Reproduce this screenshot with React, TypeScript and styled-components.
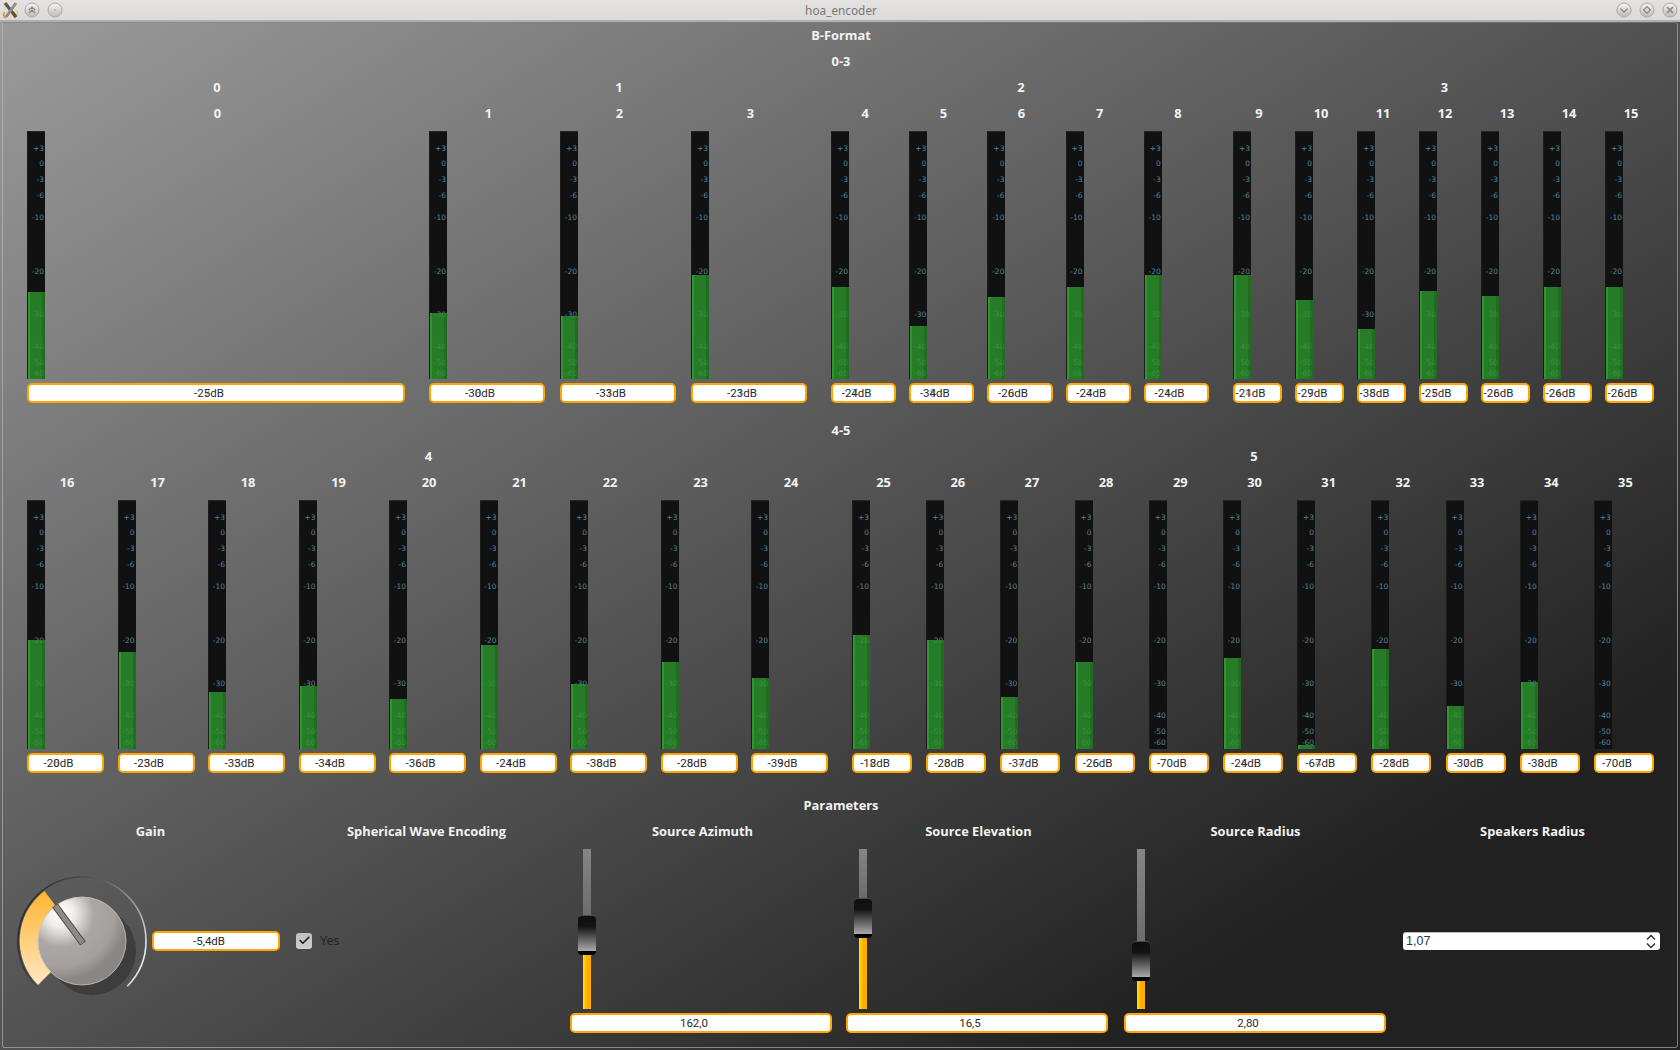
import React from "react";
import styled, { createGlobalStyle } from "styled-components";
import { Check } from "lucide-react";

const Global = createGlobalStyle`
  html, body { margin: 0; padding: 0; }
  body { width: 1680px; height: 1050px; overflow: hidden; font-family: "Open Sans", "Noto Sans", sans-serif; }
  #root { width: 1680px; height: 1050px; }
`;

const Window = styled.div`
  width: 1680px;
  height: 1050px;
  display: flex;
  flex-direction: column;
  background: linear-gradient(to bottom right, #9c9c9c 0%, #212121 83%, #212121 100%);
`;

const TitleBar = styled.header`
  flex: 0 0 20px;
  display: flex;
  align-items: center;
  justify-content: space-between;
  padding: 0 2px 0 2px;
  background: linear-gradient(#e3e2e0, #dcdbd9);
  border-bottom: 2px solid rgba(0, 0, 0, 0.22);
  position: relative;
`;

const TitleText = styled.span`
  position: absolute;
  left: 2px;
  right: 0;
  top: 2px;
  text-align: center;
  font: 11.8px/16px "Noto Sans", "Open Sans", sans-serif;
  color: #777;
`;

const IconGroup = styled.div`
  display: flex;
  align-items: center;
  gap: 7px;
`;

const Frame = styled.main`
  flex: 1;
  margin: 0 2px 2px;
  border: 1px solid rgba(190, 190, 190, 0.6);
  border-top-color: rgba(130, 130, 130, 0.55);
  border-radius: 3px;
  padding-top: 4px;
  display: flex;
  flex-direction: column;
  min-height: 0;
`;

const Label = styled.div<{ $gap?: number }>`
  height: 16px;
  margin-bottom: ${(p) => p.$gap ?? 10}px;
  padding-left: 2px;
  font: 700 12.85px/17px "Open Sans", "Noto Sans", sans-serif;
  color: #f2f2f2;
  text-align: center;
  white-space: nowrap;
`;

const ChannelLabel = styled(Label)`
  padding-left: 3px;
`;

const ParamLabel = styled(Label)`
  line-height: 15px;
`;

const ParamHeading = styled(ParamLabel)`
  margin-bottom: 9px;
  padding-left: 3px;
`;

const Section = styled.section<{ $after?: number }>`
  padding: 0 24px;
  margin-bottom: ${(p) => p.$after ?? 0}px;
`;

const Groups = styled.div`
  display: flex;
  gap: 24px;
`;

const Group = styled.div<{ $w: number }>`
  width: ${(p) => p.$w}px;
  flex: none;
`;

const Channels = styled.div<{ $gap: number }>`
  display: flex;
  gap: ${(p) => p.$gap}px;
`;

const Channel = styled.div`
  flex: 1 1 0;
  min-width: 0;
  display: flex;
  flex-direction: column;
`;

const Meter = styled.div<{ $h: number }>`
  position: relative;
  width: 18px;
  height: ${(p) => p.$h}px;
  box-sizing: border-box;
  margin-bottom: 4px;
  background: #111;
  border-top: 1px solid #262626;
  border-left: 1px solid #1b1b1b;
  overflow: hidden;
`;

const Tick = styled.span<{ $y: number }>`
  position: absolute;
  right: 1px;
  top: ${(p) => p.$y - 5}px;
  font: 7.5px/10px "DejaVu Sans", sans-serif;
  color: #55849a;
`;

const Fill = styled.div`
  position: absolute;
  left: 0;
  right: 0;
  bottom: 0;
  background: linear-gradient(
    90deg,
    rgba(54, 184, 54, 0.8) 0,
    rgba(54, 184, 54, 0.8) 2px,
    rgba(44, 150, 44, 0.8) 2px,
    rgba(44, 150, 44, 0.8) 80%,
    rgba(38, 130, 38, 0.8) 80%
  );
`;

const ValueBox = styled.div<{ $w?: number }>`
  box-sizing: border-box;
  width: ${(p) => (p.$w ? `${p.$w}px` : "100%")};
  height: 20px;
  flex: none;
  border: 2px solid #ffa600;
  border-radius: 5px;
  background: #fff;
  padding-right: 14px;
  text-align: center;
  font: 11.5px/16px "Roboto", "Noto Sans", sans-serif;
  color: #2a2a2a;
  white-space: nowrap;
`;

const Digit = styled.span`
  position: relative;
  display: inline-block;
`;

const Ghost = styled.span`
  position: absolute;
  left: 0;
  top: 0;
  opacity: 0.45;
`;

const ParamGrid = styled.div`
  margin-left: 8px;
  display: grid;
  grid-template-columns: 276px 276px 276px 276px 278px 276px;
`;

const Cell = styled.div`
  height: 183px;
  padding: 0 7px;
  display: flex;
  align-items: center;
`;

const SliderCell = styled(Cell)<{ $inset?: number }>`
  flex-direction: column;
  align-items: stretch;
  justify-content: flex-start;
  padding-left: ${(p) => p.$inset ?? 7}px;
`;

const KnobBox = styled.svg`
  flex: none;
  width: 130px;
  height: 130px;
  margin: 0 5px 0 -1px;
  overflow: visible;
`;

const CheckRow = styled.label`
  display: flex;
  align-items: center;
  gap: 8px;
  margin-left: 2px;
  font: 12.5px/16px "Noto Sans", sans-serif;
  color: #242424;
`;

const CheckBox = styled.span`
  width: 16px;
  height: 16px;
  border-radius: 3px;
  background: linear-gradient(#c2beba, #d2cecb);
  display: flex;
  align-items: center;
  justify-content: center;
  color: #1a1a1a;
`;

const Slider = styled.div`
  width: 18px;
  height: 160px;
  margin: 0 0 4px 8px;
  display: flex;
  flex-direction: column;
  align-items: center;
`;

const TrackUp = styled.div`
  width: 8px;
  background: linear-gradient(#858585, #6c6c6c);
`;

const TrackDown = styled.div`
  width: 8px;
  background: linear-gradient(90deg, #ffe600 0, #ffc400 30%, #ffab00 50%, #ffab00 100%);
`;

const Handle = styled.div`
  flex: 0 0 40px;
  width: 18px;
  box-sizing: border-box;
  border-radius: 4px;
  border-top: 1px solid #4a4a4a;
  border-bottom: 4px solid #000;
  background: linear-gradient(#0f0f0f 0%, #131313 30%, #aaa 100%);
`;

const Select = styled.div`
  box-sizing: border-box;
  width: 257px;
  height: 18px;
  margin-left: 3px;
  padding: 0 4px 0 3px;
  display: flex;
  align-items: center;
  justify-content: space-between;
  background: #fff;
  border-top: 1px solid #bbb;
  border-radius: 3px;
  font: 12.5px/16px "Liberation Sans", sans-serif;
  color: #333;
`;

const LogoMark = styled.svg`
  margin-right: -2px;
`;

const TICKS: [string, number][] = [
  ["+3", 17],
  ["0", 32],
  ["-3", 48],
  ["-6", 64],
  ["-10", 86],
  ["-20", 140],
  ["-30", 183],
  ["-40", 215],
  ["-50", 231],
  ["-60", 242],
];

type Ch = { n: number; f: number; v: string; g?: string };

const g0: Ch[] = [{ n: 0, f: 87, v: "-25", g: "7" }];
const g1: Ch[] = [
  { n: 1, f: 66, v: "-30", g: "8" },
  { n: 2, f: 63, v: "-33", g: "1" },
  { n: 3, f: 104, v: "-23", g: "1" },
];
const g2: Ch[] = [
  { n: 4, f: 92, v: "-24", g: "7" },
  { n: 5, f: 53, v: "-34", g: "8" },
  { n: 6, f: 82, v: "-26", g: "0" },
  { n: 7, f: 92, v: "-24", g: "7" },
  { n: 8, f: 104, v: "-24", g: "1" },
];
const g3: Ch[] = [
  { n: 9, f: 104, v: "-21", g: "4" },
  { n: 10, f: 79, v: "-29", g: "7" },
  { n: 11, f: 50, v: "-38", g: "5" },
  { n: 12, f: 88, v: "-25", g: "7" },
  { n: 13, f: 83, v: "-26", g: "8" },
  { n: 14, f: 92, v: "-26", g: "4" },
  { n: 15, f: 92, v: "-26", g: "8" },
];
const g4: Ch[] = [
  { n: 16, f: 109, v: "-20", g: "8" },
  { n: 17, f: 97, v: "-23", g: "5" },
  { n: 18, f: 57, v: "-33", g: "5" },
  { n: 19, f: 63, v: "-34", g: "1" },
  { n: 20, f: 50, v: "-36", g: "8" },
  { n: 21, f: 104, v: "-24", g: "1" },
  { n: 22, f: 65, v: "-38", g: "0" },
  { n: 23, f: 87, v: "-28", g: "5" },
  { n: 24, f: 71, v: "-39", g: "3" },
];
const g5: Ch[] = [
  { n: 25, f: 114, v: "-18", g: "2" },
  { n: 26, f: 109, v: "-28", g: "0" },
  { n: 27, f: 52, v: "-37", g: "4" },
  { n: 28, f: 87, v: "-26", g: "5" },
  { n: 29, f: 0, v: "-70" },
  { n: 30, f: 91, v: "-24", g: "6" },
  { n: 31, f: 4, v: "-67", g: "4" },
  { n: 32, f: 100, v: "-28", g: "1" },
  { n: 33, f: 43, v: "-30", g: "7" },
  { n: 34, f: 67, v: "-38", g: "0" },
  { n: 35, f: 0, v: "-70" },
];

function ChannelStrip({ ch, h }: { ch: Ch; h: number }) {
  const head = ch.v.slice(0, -1);
  const tail = ch.v.slice(-1);
  return (
    <Channel>
      <ChannelLabel>{ch.n}</ChannelLabel>
      <Meter $h={h}>
        {TICKS.map(([t, y]) => (
          <Tick key={t} $y={y}>
            {t}
          </Tick>
        ))}
        {ch.f > 0 && <Fill style={{ height: ch.f }} />}
      </Meter>
      <ValueBox>
        {head}
        <Digit>
          {tail}
          {ch.g && <Ghost>{ch.g}</Ghost>}
        </Digit>
        dB
      </ValueBox>
    </Channel>
  );
}

function ChannelGroup({ title, w, gap, h, list }: { title: string; w: number; gap: number; h: number; list: Ch[] }) {
  return (
    <Group $w={w}>
      <Label>{title}</Label>
      <Channels $gap={gap}>
        {list.map((c) => (
          <ChannelStrip key={c.n} ch={c} h={h} />
        ))}
      </Channels>
    </Group>
  );
}

function RoundButton({ children }: { children: React.ReactNode }) {
  return (
    <svg width="16" height="16" viewBox="0 0 16 16">
      <defs>
        <linearGradient id="wb" x1="0" y1="0" x2="0" y2="1">
          <stop offset="0" stopColor="#f4f4f3" />
          <stop offset="1" stopColor="#bdbbb8" />
        </linearGradient>
      </defs>
      <circle cx="8" cy="8" r="7" fill="url(#wb)" stroke="#a9a7a4" strokeWidth="1" />
      {children}
    </svg>
  );
}

const glyph = { fill: "none", stroke: "#8b8986", strokeWidth: 1.3 };

function Logo() {
  return (
    <LogoMark width="17" height="18" viewBox="0 0 17 18">
      <path d="M2.5 11 C1 13.5 1.5 16 4 17" fill="none" stroke="#f28a1e" strokeWidth="1.6" />
      <path d="M3 2 L14 16" stroke="#5b564c" strokeWidth="3.2" />
      <path d="M14 2 L4 16" stroke="#8d8d8d" strokeWidth="3" />
      <path d="M11 12 L14 16" stroke="#6e5318" strokeWidth="3.2" />
      <path d="M14.5 9 C16 11 16 13 15 14.5" fill="none" stroke="#f6b43a" strokeWidth="1" />
    </LogoMark>
  );
}

function Knob() {
  return (
    <KnobBox viewBox="0 0 130 130">
      <defs>
        <linearGradient id="ring" gradientUnits="userSpaceOnUse" x1="0" y1="40" x2="130" y2="90">
          <stop offset="0" stopColor="#262626" />
          <stop offset="0.5" stopColor="#5f5f5f" />
          <stop offset="0.85" stopColor="#b5b5b5" />
          <stop offset="1" stopColor="#ffffff" />
        </linearGradient>
        <linearGradient id="sector" x1="0" y1="0" x2="0" y2="1">
          <stop offset="0" stopColor="#ffb530" />
          <stop offset="1" stopColor="#ffe8c4" />
        </linearGradient>
        <radialGradient id="ball" gradientUnits="userSpaceOnUse" cx="44" cy="38" r="66">
          <stop offset="0" stopColor="#ffffff" />
          <stop offset="0.2" stopColor="#f0eeec" />
          <stop offset="0.5" stopColor="#aca7a4" />
          <stop offset="0.8" stopColor="#a3a09d" />
          <stop offset="1" stopColor="#8a8683" />
        </radialGradient>
      </defs>
      <path d="M19.75 110.25 A64 64 0 1 1 110.25 110.25" fill="none" stroke="url(#ring)" strokeWidth="1.6" />
      <path d="M65 65 L21 109 A62.5 62.5 0 0 1 27.4 15 Z" fill="url(#sector)" />
      <circle cx="75" cy="75" r="44" fill="#363434" opacity="0.7" />
      <circle cx="65" cy="65" r="44" fill="url(#ball)" stroke="#c9c5c1" strokeWidth="0.8" />
      <line x1="38" y1="29.5" x2="66" y2="67.5" stroke="#4b4946" strokeWidth="7" />
      <line x1="38.4" y1="30" x2="65.6" y2="67" stroke="#8e8a87" strokeWidth="5" />
    </KnobBox>
  );
}

function FaderCell({ up, value, inset }: { up: number; value: string; inset?: number }) {
  return (
    <SliderCell $inset={inset}>
      <Slider>
        <TrackUp style={{ height: up }} />
        <Handle />
        <TrackDown style={{ height: 120 - up }} />
      </Slider>
      <ValueBox>{value}</ValueBox>
    </SliderCell>
  );
}

export default function App() {
  return (
    <Window>
      <Global />
      <TitleBar>
        <TitleText>hoa_encoder</TitleText>
        <IconGroup>
          <Logo />
          <RoundButton>
            <path d="M4.8 8 L8 5.2 L11.2 8 M4.8 11 L8 8.2 L11.2 11" {...glyph} />
          </RoundButton>
          <RoundButton>
            <circle cx="8" cy="8" r="0.7" fill="#8b8986" />
          </RoundButton>
        </IconGroup>
        <IconGroup>
          <RoundButton>
            <path d="M4.5 6.5 L8 10 L11.5 6.5" {...glyph} />
          </RoundButton>
          <RoundButton>
            <path d="M8 4.6 L11.4 8 L8 11.4 L4.6 8 Z" {...glyph} />
          </RoundButton>
          <RoundButton>
            <path d="M5 5 L11 11 M11 5 L5 11" {...glyph} strokeWidth={1.7} />
          </RoundButton>
        </IconGroup>
      </TitleBar>
      <Frame>
        <Section $after={19}>
          <Label>B-Format</Label>
          <Label>0-3</Label>
          <Groups>
            <ChannelGroup title="0" w={378} gap={0} h={248} list={g0} />
            <ChannelGroup title="1" w={378} gap={15} h={248} list={g1} />
            <ChannelGroup title="2" w={378} gap={13} h={248} list={g2} />
            <ChannelGroup title="3" w={421} gap={13} h={248} list={g3} />
          </Groups>
        </Section>
        <Section $after={25}>
          <Label>4-5</Label>
          <Groups>
            <ChannelGroup title="4" w={801} gap={13.5} h={249} list={g4} />
            <ChannelGroup title="5" w={802} gap={14.1} h={249} list={g5} />
          </Groups>
        </Section>
        <ParamLabel>Parameters</ParamLabel>
        <ParamGrid>
          <ParamHeading>Gain</ParamHeading>
          <ParamHeading>Spherical Wave Encoding</ParamHeading>
          <ParamHeading>Source Azimuth</ParamHeading>
          <ParamHeading>Source Elevation</ParamHeading>
          <ParamHeading>Source Radius</ParamHeading>
          <ParamHeading>Speakers Radius</ParamHeading>
          <Cell>
            <Knob />
            <ValueBox $w={128}>-5,4dB</ValueBox>
          </Cell>
          <Cell>
            <CheckRow>
              <CheckBox>
                <Check size={13} strokeWidth={3} />
              </CheckBox>
              Yes
            </CheckRow>
          </Cell>
          <FaderCell up={66} value="162,0" />
          <FaderCell up={49} value="16,5" />
          <FaderCell up={92} value="2,80" inset={9} />
          <Cell>
            <Select>
              1,07
              <svg width="10" height="15" viewBox="0 0 10 15">
                <path d="M1 5.5 L5 1.5 L9 5.5 M1 9.5 L5 13.5 L9 9.5" fill="none" stroke="#333" strokeWidth="1.5" />
              </svg>
            </Select>
          </Cell>
        </ParamGrid>
      </Frame>
    </Window>
  );
}
